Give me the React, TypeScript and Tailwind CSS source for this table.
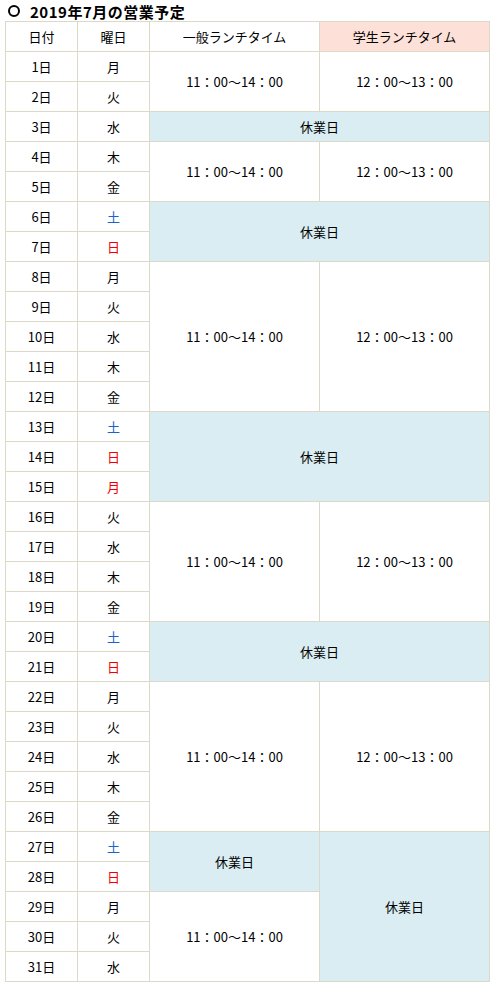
const DOW = ['月', '火', '水', '木', '金', '土', '日']

type Cell = { text: string; rowSpan: number; colSpan?: number; off?: boolean }

// July 2019 starts on Monday
const holidays = new Set([15])

// extra cells per day (only the day where a block starts)
const blocks: Record<number, Cell[]> = {
  1: [
    { text: '11：00～14：00', rowSpan: 2 },
    { text: '12：00～13：00', rowSpan: 2 },
  ],
  3: [{ text: '休業日', rowSpan: 1, colSpan: 2, off: true }],
  4: [
    { text: '11：00～14：00', rowSpan: 2 },
    { text: '12：00～13：00', rowSpan: 2 },
  ],
  6: [{ text: '休業日', rowSpan: 2, colSpan: 2, off: true }],
  8: [
    { text: '11：00～14：00', rowSpan: 5 },
    { text: '12：00～13：00', rowSpan: 5 },
  ],
  13: [{ text: '休業日', rowSpan: 3, colSpan: 2, off: true }],
  16: [
    { text: '11：00～14：00', rowSpan: 4 },
    { text: '12：00～13：00', rowSpan: 4 },
  ],
  20: [{ text: '休業日', rowSpan: 2, colSpan: 2, off: true }],
  22: [
    { text: '11：00～14：00', rowSpan: 5 },
    { text: '12：00～13：00', rowSpan: 5 },
  ],
  27: [
    { text: '休業日', rowSpan: 2, off: true },
    { text: '休業日', rowSpan: 5, off: true },
  ],
  29: [{ text: '11：00～14：00', rowSpan: 3 }],
}

const border = 'border border-[#ddd9c8]'

function dowColor(day: number) {
  const d = DOW[(day - 1) % 7]
  if (d === '土') return 'text-[#1c62c9]'
  if (d === '日' || holidays.has(day)) return 'text-[#ee0000]'
  return 'text-black'
}

export default function App() {
  const days = Array.from({ length: 31 }, (_, i) => i + 1)

  return (
    <div
      className="w-[495px] bg-white text-[13px] text-black"
      style={{ fontFamily: '"Noto Sans CJK JP", "Noto Sans", sans-serif' }}
    >
      {/* Title */}
      <div className="flex h-[21px] items-center gap-[10px] pl-[8px] pt-[1px] text-[15px] font-bold leading-none tracking-[0.5px]">
        <span className="h-[12px] w-[12px] rounded-full border-2 border-black" />
        <span>2019年7月の営業予定</span>
      </div>

      {/* Schedule */}
      <table className="ml-[5px] w-[485px] table-fixed border-collapse text-center">
        <colgroup>
          <col className="w-[72px]" />
          <col className="w-[72px]" />
          <col className="w-[170px]" />
          <col />
        </colgroup>
        <thead>
          <tr className="h-[30px]">
            <th className={`${border} font-normal`}>日付</th>
            <th className={`${border} font-normal`}>曜日</th>
            <th className={`${border} font-normal`}>一般ランチタイム</th>
            <th className={`${border} bg-[#fde0d7] font-normal`}>学生ランチタイム</th>
          </tr>
        </thead>
        <tbody>
          {days.map((day) => (
            <tr key={day} className="h-[30px]">
              <td className={border}>{day}日</td>
              <td className={`${border} ${dowColor(day)}`}>{DOW[(day - 1) % 7]}</td>
              {(blocks[day] ?? []).map((c, i) => (
                <td
                  key={i}
                  rowSpan={c.rowSpan}
                  colSpan={c.colSpan}
                  className={`${border} ${c.off ? 'bg-[#daedf2]' : ''}`}
                >
                  {c.text}
                </td>
              ))}
            </tr>
          ))}
        </tbody>
      </table>
    </div>
  )
}
